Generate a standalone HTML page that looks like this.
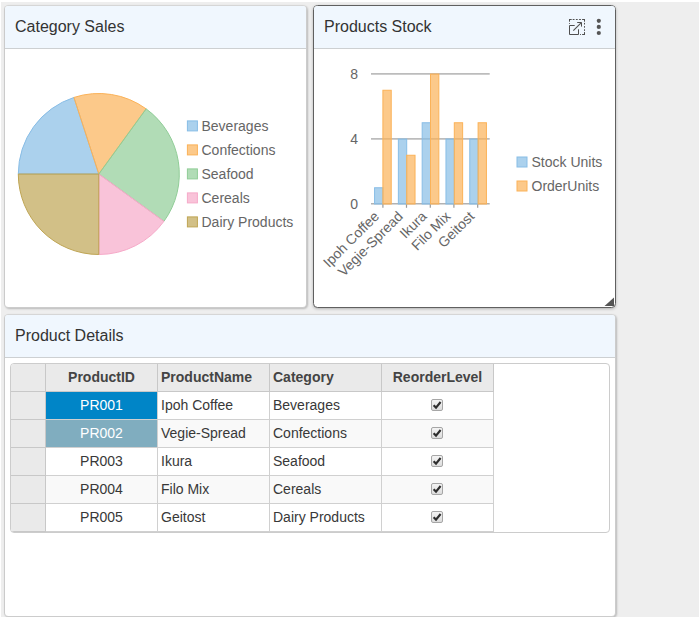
<!DOCTYPE html>
<html>
<head>
<meta charset="utf-8">
<title>Dashboard</title>
<style>
html,body{margin:0;padding:0;background:#fff;}
body{width:699px;height:620px;overflow:hidden;position:relative;font-family:"Liberation Sans",sans-serif;font-size:14px;color:#333;}
#wrap{position:absolute;left:1px;top:2px;width:698px;height:615px;background:#eeeeee;overflow:hidden;}
.tile{position:absolute;box-sizing:border-box;background:#fff;border:1px solid #cccccc;border-top-color:#d6d6d6;border-left-color:#cbcbcb;border-radius:4.5px;box-shadow:1px 1px 2px rgba(0,0,0,0.22);}
.tile.active{border-color:#606060;box-shadow:0 1px 3px rgba(0,0,0,0.26);}
.hd{position:absolute;left:0;top:0;right:0;height:42px;background:#f0f7fe;border-bottom:1px solid #cdd0d2;border-radius:3px 3px 0 0;}
.hd span{position:absolute;left:10px;top:11px;font-size:16px;line-height:20px;color:#333;white-space:nowrap;}
svg{position:absolute;left:0;top:0;overflow:visible;}
svg text{font-family:"Liberation Sans",sans-serif;font-size:14px;fill:#666;}
/* grid */
#grid{position:absolute;left:5px;top:48px;width:600px;height:170px;box-sizing:border-box;border:1px solid #cccccc;border-radius:4px;background:#fff;overflow:hidden;}
.c{position:absolute;box-sizing:border-box;height:28px;border-right:1px solid #d0d0d0;border-bottom:1px solid #d0d0d0;padding:0 3px;line-height:27px;font-size:14px;color:#383838;white-space:nowrap;overflow:hidden;background:#fff;}
.c.h{background:#eaeaea;color:#444;font-weight:bold;border-color:#c8c8c8;}
.c.alt{background:#f9f9f9;}
.c.ctr{text-align:center;}
.c.sel{background:#0085c7;color:#fff;}
.c.msel{background:#80adbf;color:#fff;}
.cb{position:absolute;left:49px;top:7px;width:12px;height:12px;box-sizing:border-box;border:1px solid #a6a6a6;border-radius:2px;background:linear-gradient(#f4f4f4,#dcdcdc);}
.cb svg{left:-1px;top:-1px;}
</style>
</head>
<body>
<div id="wrap">

<!-- Tile 1 : Category Sales -->
<div class="tile" style="left:3px;top:3px;width:303px;height:303px;">
  <div class="hd"><span>Category Sales</span></div>
  <svg width="301" height="301" viewBox="0 0 301 301">
    <!-- tile inner origin = page (5,6) -->
    <g transform="translate(-5,-6)" stroke-width="1">
      <path d="M98.8,174.0 L18.30,174.00 A80.5,80.5 0 0 1 73.92,97.44 Z" fill="rgba(136,189,230,0.7)" stroke="#88bde6"/>
      <path d="M98.8,174.0 L73.92,97.44 A80.5,80.5 0 0 1 146.12,108.87 Z" fill="rgba(251,178,88,0.7)" stroke="#fbb258"/>
      <path d="M98.8,174.0 L146.12,108.87 A80.5,80.5 0 0 1 163.93,221.32 Z" fill="rgba(144,205,151,0.7)" stroke="#90cd97"/>
      <path d="M98.8,174.0 L163.93,221.32 A80.5,80.5 0 0 1 98.80,254.50 Z" fill="rgba(246,170,201,0.7)" stroke="#f6aac9"/>
      <path d="M98.8,174.0 L98.80,254.50 A80.5,80.5 0 0 1 18.30,174.00 Z" fill="rgba(191,165,84,0.7)" stroke="#bfa554"/>
      <g>
        <rect x="187.4" y="120.9" width="10" height="10" fill="rgba(136,189,230,0.7)" stroke="#88bde6"/>
        <rect x="187.4" y="144.9" width="10" height="10" fill="rgba(251,178,88,0.7)" stroke="#fbb258"/>
        <rect x="187.4" y="168.9" width="10" height="10" fill="rgba(144,205,151,0.7)" stroke="#90cd97"/>
        <rect x="187.4" y="192.9" width="10" height="10" fill="rgba(246,170,201,0.7)" stroke="#f6aac9"/>
        <rect x="187.4" y="216.9" width="10" height="10" fill="rgba(191,165,84,0.7)" stroke="#bfa554"/>
      </g>
      <g stroke="none">
        <text x="201.5" y="131">Beverages</text>
        <text x="201.5" y="155">Confections</text>
        <text x="201.5" y="179">Seafood</text>
        <text x="201.5" y="203">Cereals</text>
        <text x="201.5" y="227">Dairy Products</text>
      </g>
    </g>
  </svg>
</div>

<!-- Tile 2 : Products Stock -->
<div class="tile active" style="left:312px;top:3px;width:303px;height:303px;">
  <div class="hd"><span>Products Stock</span>
    <svg width="301" height="42" viewBox="0 0 301 42">
      <!-- origin page (314,6) -->
      <g transform="translate(-314,-6)">
        <!-- maximize icon -->
        <g fill="none" stroke="#4f4f4f" stroke-width="1">
          <path d="M574.7,25.5 H569.5 V34.5 H578.5 V29.3"/>
          <path d="M573.3,30.6 L581.3,22.6" stroke-width="1.1"/>
          <path d="M577.2,22.5 H581.5 V26.6"/>
          <path d="M569,19.5 H571.7 M572.7,19.5 H574.5 M575.9,19.5 H577.7 M579.1,19.5 H580.9 M582.1,19.5 H585 M569.5,19 V21.7 M569.5,23.1 V23.9 M584.5,19 V21.7 M584.5,22.9 V24.5 M584.5,26.1 V27.7 M584.5,29.3 V30.9 M584.5,32.1 V35 M580,34.5 H580.9 M582.1,34.5 H585"/>
        </g>
        <circle cx="598.8" cy="20.8" r="2.1" fill="#555"/>
        <circle cx="598.8" cy="26.9" r="2.1" fill="#555"/>
        <circle cx="598.8" cy="33" r="2.1" fill="#555"/>
      </g>
    </svg>
  </div>
  <svg width="301" height="301" viewBox="0 0 301 301">
    <g transform="translate(-314,-6)">
      <!-- gridlines -->
      <g stroke="#bcbcbc" stroke-width="1.8">
        <line x1="371" y1="73.85" x2="489.7" y2="73.85"/>
        <line x1="371" y1="138.85" x2="489.7" y2="138.85"/>
      </g>
      <line x1="371" y1="203.75" x2="489.7" y2="203.75" stroke="#b2b2b2" stroke-width="1.3"/>
      <g stroke="#9a9a9a" stroke-width="1.2">
        <line x1="382.9" y1="204" x2="382.9" y2="207.8"/>
        <line x1="406.5" y1="204" x2="406.5" y2="207.8"/>
        <line x1="430.3" y1="204" x2="430.3" y2="207.8"/>
        <line x1="453.9" y1="204" x2="453.9" y2="207.8"/>
        <line x1="477.7" y1="204" x2="477.7" y2="207.8"/>
      </g>
      <!-- bars -->
      <g fill="rgba(136,189,230,0.7)" stroke="#88bde6" stroke-width="1">
        <rect x="374.57" y="187.75" width="8.33" height="16.25"/>
        <rect x="398.37" y="139" width="8.33" height="65"/>
        <rect x="422.17" y="122.75" width="8.33" height="81.25"/>
        <rect x="445.97" y="139" width="8.33" height="65"/>
        <rect x="469.77" y="139" width="8.33" height="65"/>
      </g>
      <g fill="rgba(251,178,88,0.7)" stroke="#fbb258" stroke-width="1">
        <rect x="382.9" y="90.25" width="8.33" height="113.75"/>
        <rect x="406.7" y="155.25" width="8.33" height="48.75"/>
        <rect x="430.5" y="74" width="8.33" height="130"/>
        <rect x="454.3" y="122.75" width="8.33" height="81.25"/>
        <rect x="478.1" y="122.75" width="8.33" height="81.25"/>
      </g>
      <!-- y labels -->
      <g text-anchor="end">
        <text x="358" y="79">8</text>
        <text x="358" y="144">4</text>
        <text x="358" y="209">0</text>
      </g>
      <!-- x labels -->
      <g text-anchor="end">
        <text transform="translate(380,217.2) rotate(-45)">Ipoh Coffee</text>
        <text transform="translate(403.8,217.2) rotate(-45)">Vegie-Spread</text>
        <text transform="translate(427.6,217.2) rotate(-45)">Ikura</text>
        <text transform="translate(451.4,217.2) rotate(-45)">Filo Mix</text>
        <text transform="translate(475.2,217.2) rotate(-45)">Geitost</text>
      </g>
      <!-- legend -->
      <rect x="517" y="157" width="10" height="10" fill="rgba(136,189,230,0.7)" stroke="#88bde6"/>
      <rect x="517" y="181" width="10" height="10" fill="rgba(251,178,88,0.7)" stroke="#fbb258"/>
      <text x="531.5" y="166.5">Stock Units</text>
      <text x="531.5" y="190.5">OrderUnits</text>
      <!-- resize handle -->
      <path d="M604.5,306 L614,306 L614,297.5 Z" fill="#555"/>
    </g>
  </svg>
</div>

<!-- Tile 3 : Product Details -->
<div class="tile" style="left:3px;top:312px;width:612px;height:303px;">
  <div class="hd"><span>Product Details</span></div>
  <div id="grid">
    <!-- header row -->
    <div class="c h" style="left:0;top:0;width:35px;"></div>
    <div class="c h ctr" style="left:35px;top:0;width:112px;">ProductID</div>
    <div class="c h" style="left:147px;top:0;width:112px;">ProductName</div>
    <div class="c h" style="left:259px;top:0;width:112px;">Category</div>
    <div class="c h ctr" style="left:371px;top:0;width:112px;">ReorderLevel</div>
    <!-- row 1 -->
    <div class="c h" style="left:0;top:28px;width:35px;"></div>
    <div class="c ctr sel" style="left:35px;top:28px;width:112px;">PR001</div>
    <div class="c" style="left:147px;top:28px;width:112px;">Ipoh Coffee</div>
    <div class="c" style="left:259px;top:28px;width:112px;">Beverages</div>
    <div class="c" style="left:371px;top:28px;width:112px;"><div class="cb"><svg width="12" height="12" viewBox="0 0 12 12"><path d="M2.6,6.3 L5,8.6 L9.6,3" fill="none" stroke="#2e2e2e" stroke-width="2.1"/></svg></div></div>
    <!-- row 2 -->
    <div class="c h" style="left:0;top:56px;width:35px;"></div>
    <div class="c ctr msel" style="left:35px;top:56px;width:112px;">PR002</div>
    <div class="c alt" style="left:147px;top:56px;width:112px;">Vegie-Spread</div>
    <div class="c alt" style="left:259px;top:56px;width:112px;">Confections</div>
    <div class="c alt" style="left:371px;top:56px;width:112px;"><div class="cb"><svg width="12" height="12" viewBox="0 0 12 12"><path d="M2.6,6.3 L5,8.6 L9.6,3" fill="none" stroke="#2e2e2e" stroke-width="2.1"/></svg></div></div>
    <!-- row 3 -->
    <div class="c h" style="left:0;top:84px;width:35px;"></div>
    <div class="c ctr" style="left:35px;top:84px;width:112px;">PR003</div>
    <div class="c" style="left:147px;top:84px;width:112px;">Ikura</div>
    <div class="c" style="left:259px;top:84px;width:112px;">Seafood</div>
    <div class="c" style="left:371px;top:84px;width:112px;"><div class="cb"><svg width="12" height="12" viewBox="0 0 12 12"><path d="M2.6,6.3 L5,8.6 L9.6,3" fill="none" stroke="#2e2e2e" stroke-width="2.1"/></svg></div></div>
    <!-- row 4 -->
    <div class="c h" style="left:0;top:112px;width:35px;"></div>
    <div class="c ctr alt" style="left:35px;top:112px;width:112px;">PR004</div>
    <div class="c alt" style="left:147px;top:112px;width:112px;">Filo Mix</div>
    <div class="c alt" style="left:259px;top:112px;width:112px;">Cereals</div>
    <div class="c alt" style="left:371px;top:112px;width:112px;"><div class="cb"><svg width="12" height="12" viewBox="0 0 12 12"><path d="M2.6,6.3 L5,8.6 L9.6,3" fill="none" stroke="#2e2e2e" stroke-width="2.1"/></svg></div></div>
    <!-- row 5 -->
    <div class="c h" style="left:0;top:140px;width:35px;"></div>
    <div class="c ctr" style="left:35px;top:140px;width:112px;">PR005</div>
    <div class="c" style="left:147px;top:140px;width:112px;">Geitost</div>
    <div class="c" style="left:259px;top:140px;width:112px;">Dairy Products</div>
    <div class="c" style="left:371px;top:140px;width:112px;"><div class="cb"><svg width="12" height="12" viewBox="0 0 12 12"><path d="M2.6,6.3 L5,8.6 L9.6,3" fill="none" stroke="#2e2e2e" stroke-width="2.1"/></svg></div></div>
  </div>
</div>

</div>
</body>
</html>
